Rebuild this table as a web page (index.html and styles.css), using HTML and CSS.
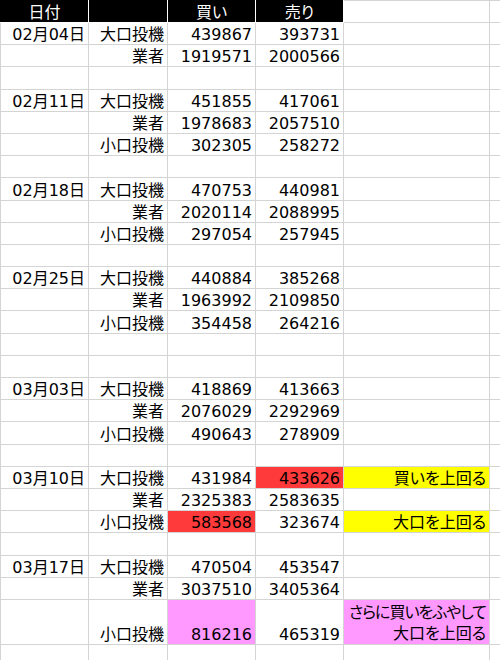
FILE: index.html
```html
<!DOCTYPE html>
<html lang="ja">
<head>
<meta charset="utf-8">
<title>投機 売買</title>
<link rel="stylesheet" href="styles.css">
</head>
<body>
<table class="sheet">
  <colgroup>
    <col class="c-date"><col class="c-type"><col class="c-num"><col class="c-num"><col class="c-note"><col class="c-rest">
  </colgroup>
  <thead>
    <tr class="head">
      <th class="hd">日付</th><th class="hd"></th><th class="hd">買い</th><th class="hd">売り</th><th class="hw"></th><th class="hw"></th>
    </tr>
  </thead>
  <tbody>
    <tr><td>02月04日</td><td>大口投機</td><td>439867</td><td>393731</td><td></td><td></td></tr>
    <tr><td></td><td>業者</td><td>1919571</td><td>2000566</td><td></td><td></td></tr>
    <tr><td></td><td></td><td></td><td></td><td></td><td></td></tr>
    <tr><td>02月11日</td><td>大口投機</td><td>451855</td><td>417061</td><td></td><td></td></tr>
    <tr><td></td><td>業者</td><td>1978683</td><td>2057510</td><td></td><td></td></tr>
    <tr><td></td><td>小口投機</td><td>302305</td><td>258272</td><td></td><td></td></tr>
    <tr><td></td><td></td><td></td><td></td><td></td><td></td></tr>
    <tr><td>02月18日</td><td>大口投機</td><td>470753</td><td>440981</td><td></td><td></td></tr>
    <tr><td></td><td>業者</td><td>2020114</td><td>2088995</td><td></td><td></td></tr>
    <tr><td></td><td>小口投機</td><td>297054</td><td>257945</td><td></td><td></td></tr>
    <tr><td></td><td></td><td></td><td></td><td></td><td></td></tr>
    <tr><td>02月25日</td><td>大口投機</td><td>440884</td><td>385268</td><td></td><td></td></tr>
    <tr><td></td><td>業者</td><td>1963992</td><td>2109850</td><td></td><td></td></tr>
    <tr><td></td><td>小口投機</td><td>354458</td><td>264216</td><td></td><td></td></tr>
    <tr><td></td><td></td><td></td><td></td><td></td><td></td></tr>
    <tr><td></td><td></td><td></td><td></td><td></td><td></td></tr>
    <tr><td>03月03日</td><td>大口投機</td><td>418869</td><td>413663</td><td></td><td></td></tr>
    <tr><td></td><td>業者</td><td>2076029</td><td>2292969</td><td></td><td></td></tr>
    <tr><td></td><td>小口投機</td><td>490643</td><td>278909</td><td></td><td></td></tr>
    <tr><td></td><td></td><td></td><td></td><td></td><td></td></tr>
    <tr><td>03月10日</td><td>大口投機</td><td>431984</td><td class="red">433626</td><td class="yellow">買いを上回る</td><td></td></tr>
    <tr><td></td><td>業者</td><td>2325383</td><td>2583635</td><td></td><td></td></tr>
    <tr><td></td><td>小口投機</td><td class="red">583568</td><td>323674</td><td class="yellow">大口を上回る</td><td></td></tr>
    <tr><td></td><td></td><td></td><td></td><td></td><td></td></tr>
    <tr><td>03月17日</td><td>大口投機</td><td>470504</td><td>453547</td><td></td><td></td></tr>
    <tr><td></td><td>業者</td><td>3037510</td><td>3405364</td><td></td><td></td></tr>
    <tr class="tall"><td></td><td>小口投機</td><td class="pink">816216</td><td>465319</td><td class="pink note2"><span class="tight">さらに買いをふやして</span><br>大口を上回る</td><td></td></tr>
    <tr><td></td><td></td><td></td><td></td><td></td><td></td></tr>
  </tbody>
</table>
</body>
</html>
```

FILE: styles.css
```css
html, body {
  margin: 0;
  padding: 0;
  background: #ffffff;
}

body {
  width: 500px;
  height: 660px;
  overflow: hidden;
  font-family: "DejaVu Sans", "Noto Sans CJK JP", sans-serif;
  font-size: 16px;
  color: #000000;
  font-feature-settings: "palt" 1;
}

.sheet {
  border-collapse: collapse;
  table-layout: fixed;
  width: 510px;
}

.c-date { width: 88px; }
.c-type { width: 79px; }
.c-num { width: 88px; }
.c-note { width: 146px; }
.c-rest { width: 21px; }

.sheet tr {
  height: 22.2px;
}

.sheet tr.head {
  height: 22px;
}

.sheet tr.tall {
  height: 45px;
}

.sheet td,
.sheet th {
  border: 1px solid #d4d4d4;
  padding: 0 3px 0 3px;
  line-height: 18px;
  height: 21px;
  text-align: right;
  vertical-align: bottom;
  white-space: nowrap;
  overflow: hidden;
  font-weight: normal;
}

.sheet tr.tall td {
  height: 44px;
}

.sheet td.note2 {
  line-height: 21px;
  padding-left: 0;
}

.tight {
  letter-spacing: -1px;
}

.sheet th.hd {
  background: #000000;
  color: #ffffff;
  text-align: center;
  border: 1px solid #ffffff;
  border-top-color: #000000;
  border-left-color: #000000;
}

.sheet th.hw {
  background: #ffffff;
}

.sheet td.red {
  background: #ff3a3a;
}

.sheet td.yellow {
  background: #ffff00;
}

.sheet td.pink {
  background: #ff99ff;
}
```
